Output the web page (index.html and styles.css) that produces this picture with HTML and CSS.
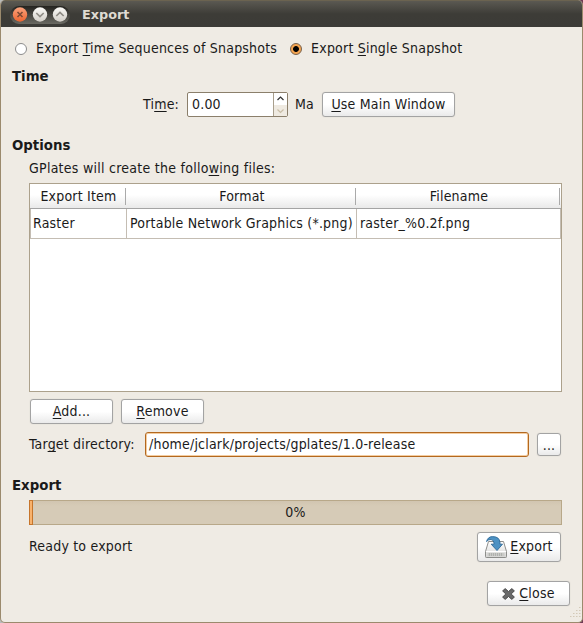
FILE: index.html
```html
<!DOCTYPE html>
<html lang="en">
<head>
<meta charset="utf-8">
<title>Export</title>
<link rel="stylesheet" href="styles.css">
</head>
<body>
<div class="window">
  <header class="titlebar">
    <div class="controls">
      <svg width="58" height="18" viewBox="0 0 58 18">
        <defs>
          <linearGradient id="orange" x1="0" y1="0" x2="0" y2="1"><stop offset="0" stop-color="#faa27c"/><stop offset="1" stop-color="#ee6530"/></linearGradient>
          <linearGradient id="silver" x1="0" y1="0" x2="0" y2="1"><stop offset="0" stop-color="#fbfaf7"/><stop offset="1" stop-color="#d3cfc8"/></linearGradient>
        </defs>
        <circle cx="9" cy="8.500" r="7.200" fill="url(#orange)"/>
        <path d="M6.500 6l5 5M11.500 6l-5 5" stroke="#7d4a34" stroke-width="1.600"/>
        <circle cx="29" cy="8.500" r="7.200" fill="url(#silver)"/>
        <path d="M25.300 7L29 10.500l3.700-3.500" fill="none" stroke="#8f8c85" stroke-width="1.700"/>
        <circle cx="49" cy="8.500" r="7.200" fill="url(#silver)"/>
        <path d="M45.300 10L49 6.500l3.700 3.500" fill="none" stroke="#8f8c85" stroke-width="1.700"/>
      </svg>
    </div>
    <span class="title">Export</span>
  </header>
  <main class="content">
    <div class="modes">
      <label class="mode"><span class="radio"></span><span>Export <u>T</u>ime Sequences of Snapshots</span></label>
      <label class="mode"><span class="radio on"></span><span>Export <u>S</u>ingle Snapshot</span></label>
    </div>
    <h2 class="h-time">Time</h2>
    <div class="time-row">
      <span class="time-label">Ti<u>m</u>e:</span>
      <div class="spin"><span class="value">0.00</span>
        <span class="arrows"><svg width="13" height="23" viewBox="0 0 13 23"><path d="M3.500 7l3-3 3 3" fill="none" stroke="#333" stroke-width="1.200"/><path d="M3.500 16.500l3 3 3-3" fill="none" stroke="#c9bda6" stroke-width="1.200"/></svg></span>
      </div>
      <span class="unit">Ma</span>
      <button class="btn use"><span><u>U</u>se Main Window</span></button>
    </div>
    <h2 class="h-options">Options</h2>
    <div class="files-label">GPlates will create the follo<u>w</u>ing files:</div>
    <div class="table">
      <div class="thead"><span>Export Item</span><span>Format</span><span>Filename</span></div>
      <div class="trow"><span>Raster</span><span>Portable Network Graphics (*.png)</span><span>raster_%0.2f.png</span></div>
    </div>
    <div class="table-actions">
      <button class="btn"><span><u>A</u>dd...</span></button>
      <button class="btn"><span><u>R</u>emove</span></button>
    </div>
    <div class="target">
      <span class="target-label">Tar<u>g</u>et directory:</span>
      <div class="path">/home/jclark/projects/gplates/1.0-release</div>
      <button class="btn browse">...</button>
    </div>
    <h2 class="h-export">Export</h2>
    <div class="progress"><span class="bar"></span><span class="percent">0%</span></div>
    <div class="run-row">
      <span class="status">Ready to export</span>
      <button class="btn export">
        <svg width="22" height="22" viewBox="0 0 22 22">
          <defs><linearGradient id="disk" x1="0" y1="0" x2="0" y2="1"><stop offset="0" stop-color="#fff"/><stop offset="1" stop-color="#d5d5d3"/></linearGradient></defs>
          <path d="M3.500 5.500h15l3 10v5.200q0 .8-.8.800H1.300q-.8 0-.8-.8v-5.200z" fill="url(#disk)" stroke="#8c8d8a"/>
          <path d="M1 15.500h20" stroke="#fff"/>
          <rect x="2.500" y="17" width="17" height="3" fill="#c9cac7"/>
          <path d="M4.500 17v3M6.500 17v3M8.500 17v3M10.500 17v3M12.500 17v3M14.500 17v3M16.500 17v3" stroke="#a5a7a3" stroke-width=".7"/>
          <path d="M1.500 5.500Q3 .6 7.500.6q7-.1 7.500 6v1.600h2.500L12 14.500 6.200 8.200H9V7Q8.800 3.800 6 3.500 3.500 3.300 1.500 5.500z" fill="#4d92c3" stroke="#2f6a98" stroke-width=".9" stroke-linejoin="round"/>
        </svg>
        <span><u>E</u>xport</span>
      </button>
    </div>
    <div class="close-row">
      <button class="btn close">
        <svg width="13" height="12" viewBox="0 0 13 12"><path d="M3.200.6L6.500 3.500 9.800.6l2.600 2.300L9.200 6l3.200 3.100-2.600 2.300-3.300-2.900-3.300 2.900L.6 9.100 3.800 6 .6 2.900z" fill="#696969" stroke="#454545" stroke-width=".9" stroke-linejoin="round"/></svg>
        <span><u>C</u>lose</span>
      </button>
    </div>
  </main>
  <svg class="grip" width="11" height="11" viewBox="0 0 11 11">
    <path d="M9 1.500h1.500M6 4.500h1.500M9 4.500h1.500M3 7.500h1.500M6 7.500h1.500M9 7.500h1.500M0 10.500h1.500M3 10.500h1.500M6 10.500h1.500M9 10.500h1.500" stroke="#d3c9b7" stroke-width="1.200"/>
  </svg>
</div>
</body>
</html>
```
FILE: styles.css
```css
* { box-sizing: border-box; }
body {
  margin: 0;
  width: 583px;
  height: 623px;
  overflow: hidden;
  background: linear-gradient(90deg, #b9bbbb 50%, #6f3a55 50%);
  font: 14px/16px "DejaVu Sans Condensed", "DejaVu Sans", sans-serif;
  font-stretch: condensed;
  letter-spacing: .2px;
  color: #1a1a1a;
}
u {
  text-decoration: underline 1px;
  text-underline-offset: 2px;
  text-decoration-skip-ink: none;
}
.window {
  position: relative;
  height: 623px;
  background: #efebe4;
  border: 1px solid #9b8a6d;
  border-top: 0;
  border-radius: 5px;
  overflow: hidden;
}
.titlebar {
  display: flex;
  align-items: center;
  height: 27px;
  padding: 1px 0 0 9px;
  border-top: 1px solid #6b6350;
  background: linear-gradient(#5b5952, #3d3c37 50%, #3c3b37);
}
.controls {
  width: 60px;
  height: 18px;
  padding-left: 1px;
  border-radius: 9px;
  background: linear-gradient(#24231f, #6a6962);
}
.controls svg { display: block; }
.title {
  margin-left: 12px;
  font: bold 12.8px/16px "DejaVu Sans", sans-serif;
  letter-spacing: 0;
  color: #dfdbd2;
}
.content { padding: 0 20px 0 11px; }
.modes { display: flex; gap: 10px; height: 16px; margin-top: 13px; }
.mode { display: flex; gap: 9px; padding-left: 3px; }
.mode span { white-space: nowrap; }
.radio {
  flex: none;
  width: 12px;
  height: 12px;
  margin-top: 3px;
  border: 1px solid #8c8c8c;
  border-radius: 50%;
  background: #fff;
}
.radio.on {
  border-color: #77604a;
  background: radial-gradient(circle, #000 0 2.500px, #f4a450 3.300px);
}
h2 {
  height: 16px;
  margin: 0;
  font: bold 13.33px/18px "DejaVu Sans", sans-serif;
  letter-spacing: 0;
}
.h-time { margin-top: 12px; }
.time-row { display: flex; height: 26px; line-height: 24px; margin-top: 8px; }
.time-label { width: 175px; padding-left: 131px; white-space: nowrap; }
.spin {
  display: flex;
  width: 101px;
  height: 25px;
  border: 1px solid #8b7f6b;
  border-radius: 2px;
  background: #fff;
  line-height: 22px;
}
.value { flex: 1; padding-left: 4px; }
.arrows {
  width: 14px;
  border-left: 1px solid #a99f8d;
  background: linear-gradient(#fff 50%, #efeae1 50%);
}
.arrows svg { display: block; }
.unit { width: 34px; padding-left: 7px; }
.btn {
  display: flex;
  align-items: center;
  justify-content: center;
  width: 83px;
  height: 25px;
  padding: 0;
  border: 1px solid #a3a3a3;
  border-radius: 3px;
  background: linear-gradient(#fff 50%, #eaeaea);
  box-shadow: 0 0 1px #c2beb7;
  font: inherit;
  line-height: 16px;
  letter-spacing: inherit;
  color: inherit;
  white-space: nowrap;
}
.btn span { padding-bottom: 2px; }
.use { width: 133px; }
.h-options { margin-top: 19px; }
.files-label { margin: 7px 0 0 17px; letter-spacing: .26px; }
.table {
  height: 209px;
  margin: 7px 0 0 17px;
  border: 1px solid #aca18c;
  background: #fff;
}
.thead, .trow { display: grid; grid-template-columns: 97px 230px 1fr; }
.thead {
  height: 25px;
  line-height: 25px;
  text-align: center;
  background: linear-gradient(#fff 45%, #e9e9e9);
  border-bottom: 1px solid #a4a4a4;
}
.thead span {
  background: linear-gradient(#aaa, #aaa) calc(100% - 1px) 4px / 1px 17px no-repeat;
}
.trow { height: 30px; line-height: 29px; border-bottom: 1px solid #c4bdb3; }
.trow span { padding-left: 3px; border-right: 1px solid #c4bdb3; white-space: nowrap; }
.trow span:first-child { border-left: 1px solid #c4bdb3; padding-left: 2px; }
.table-actions { display: flex; gap: 8px; margin: 7px 0 0 18px; }
.target { display: flex; align-items: center; height: 25px; margin: 8px 0 0 17px; }
.target-label { width: 116px; padding-bottom: 2px; white-space: nowrap; }
.path {
  width: 384px;
  height: 25px;
  padding-left: 3px;
  line-height: 23px;
  border: 1px solid #b3681f;
  border-radius: 3px;
  background: #fff;
  box-shadow: inset 0 0 0 1px #f4cda0;
}
.browse { width: 24px; height: 23px; margin-left: 8px; }
.h-export { margin-top: 20px; }
.progress {
  display: flex;
  height: 25px;
  margin: 7px 0 0 17px;
  border: 1px solid #b8a889;
  background: linear-gradient(#d1c5b0, #d6cbb7 5px);
}
.bar {
  width: 4px;
  height: 25px;
  margin: -1px 0 0 -1px;
  border: 1px solid #c6752b;
  background: #f8b26c;
}
.percent { flex: 1; padding-right: 3px; line-height: 23px; text-align: center; }
.run-row { display: flex; justify-content: space-between; align-items: center; height: 30px; margin: 7px 1px 0 17px; }
.status { padding-bottom: 2px; }
.export { width: 84px; height: 30px; gap: 3px; }
.close-row { display: flex; justify-content: flex-end; margin: 19px -8px 0 0; }
.close { gap: 4px; }
.grip { position: absolute; right: 1px; bottom: 5px; }
```
